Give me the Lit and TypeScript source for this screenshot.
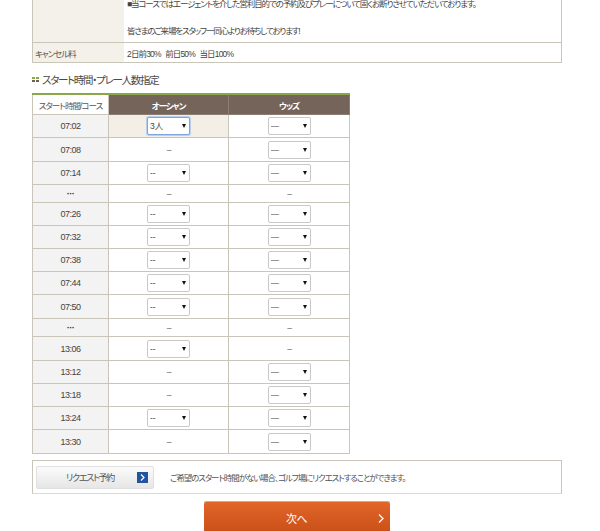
import { LitElement, html, css } from "lit";
import { customElement } from "lit/decorators.js";

type Row = { t: string; a: string | null; b: string | null; h: number; on?: boolean };
const rows: Row[] = [
  { t: "07:02", a: "3人", b: "—", h: 23, on: true },
  { t: "07:08", a: null, b: "—", h: 24 },
  { t: "07:14", a: "--", b: "—", h: 23 },
  { t: "···", a: null, b: null, h: 18 },
  { t: "07:26", a: "--", b: "—", h: 23 },
  { t: "07:32", a: "--", b: "—", h: 23 },
  { t: "07:38", a: "--", b: "—", h: 23 },
  { t: "07:44", a: "--", b: "—", h: 23 },
  { t: "07:50", a: "--", b: "—", h: 24 },
  { t: "···", a: null, b: null, h: 18 },
  { t: "13:06", a: "--", b: null, h: 24 },
  { t: "13:12", a: null, b: "—", h: 23 },
  { t: "13:18", a: null, b: "—", h: 23 },
  { t: "13:24", a: "--", b: "—", h: 23 },
  { t: "13:30", a: null, b: "—", h: 24 },
];

@customElement("app-root")
export class AppRoot extends LitElement {
  static styles = css`
    :host {
      display: block;
      width: 600px;
      height: 531px;
      overflow: hidden;
      background: #fff;
      color: #444;
      font-family: "Liberation Sans", "Noto Sans CJK JP", sans-serif;
      font-size: 8.5px;
      letter-spacing: -1.1px;
      font-feature-settings: "palt";
    }
    .wrap { padding: 0 38px 0 32px; }
    .info {
      border: 1px solid #c9c5b9;
      border-top: 0;
      display: grid;
      grid-template-columns: 91px 1fr;
    }
    .info .l { background: #f4f1ea; padding-left: 2px; display: flex; align-items: center; color: #555; }
    .info .r { padding-left: 3px; }
    .notice { height: 42px; overflow: hidden; border-bottom: 1px solid #c9c5b9; }
    .notice p { margin: 0; line-height: 13.5px; }
    .notice p:last-child { letter-spacing: -1.2px; }
    .notice .in { margin-top: -2px; }
    .lab1 { height: 42px; border-bottom: 1px solid #c9c5b9; }
    .fee { height: 19px; display: flex; align-items: center; }
    .r.fee { letter-spacing: -0.85px; }
    h2 {
      margin: 10px 0 7px;
      height: 13px;
      display: flex;
      align-items: center;
      gap: 3px;
      font-size: 10.5px;
      letter-spacing: -1.3px;
      font-weight: 400;
      color: #4a4a4a;
    }
    .dots { width: 7px; height: 6px; display: grid; grid-template-columns: 3px 3px; gap: 0 1px; grid-auto-rows: 3px; }
    .dots i { width: 3px; height: 2px; background: #6f5f55; }
    .dots i:nth-child(-n + 2) { background: #8aa84a; }
    table { border-collapse: collapse; table-layout: fixed; width: 317px; }
    th, td { border: 1px solid #c9c5b9; padding: 0; text-align: center; font-weight: 400; }
    thead th { height: 19px; background: #75645a; color: #fff; font-weight: 700; border-top: 2px solid #8aa84a; border-color: #8c7d72; border-top-color: #8aa84a; white-space: nowrap; }
    thead th.first { background: #fff; color: #555; font-weight: 400; border-color: #c9c5b9; border-top-color: #8aa84a; letter-spacing: -0.95px; }
    td.time { background: #f3f3f3; color: #444; font-size: 9px; letter-spacing: -0.5px; }
    td.dotrow { font-weight: 700; color: #333; }
    td.on { background: #f3efe6; }
    td { color: #666; }
    .sel { position: relative; display: inline-block; vertical-align: middle; width: 43px; height: 18px; }
    select {
      appearance: none;
      width: 43px;
      height: 18px;
      margin: 0;
      padding: 0 0 0 2px;
      border: 1px solid #c8c8c8;
      border-radius: 2px;
      background: #fff;
      color: #444;
      font: inherit;
      letter-spacing: 0;
      display: block;
    }
    .sel.focus select { border-color: #7da6e0; box-shadow: 0 0 0 1px #b8cff0; }
    .sel::after {
      content: "";
      position: absolute;
      right: 4px;
      top: 7px;
      border-style: solid;
      border-width: 4px 2.5px 0;
      border-color: #111 transparent transparent;
    }
    .req {
      margin-top: 6px;
      height: 32px;
      border: 1px solid #c9c5b9;
      border-bottom-color: #dedad0;
      display: flex;
      align-items: center;
      padding-left: 3px;
      gap: 16px;
      color: #555;
    }
    .rb {
      width: 118px;
      height: 23px;
      box-sizing: border-box;
      border: 1px solid #e0e0e0;
      border-radius: 2px;
      background: linear-gradient(#fbfbfb, #e6e6e6);
      display: flex;
      align-items: center;
      padding: 0 5px 0 29px;
      justify-content: space-between;
      color: #555;
      font-size: 9px;
      letter-spacing: -1.3px;
    }
    .sq { width: 11px; height: 11px; background: #2255a0; display: flex; align-items: center; justify-content: center; }
    .next {
      margin: 8px 0 0 172px;
      width: 186px;
      height: 40px;
      border-radius: 2px 2px 0 0;
      background: linear-gradient(#e2652a, #c24a12);
      box-shadow: 0 -1px 0 #e8a27e;
      color: #fff;
      font-size: 11px;
      letter-spacing: -0.5px;
      display: flex;
      align-items: flex-start;
      justify-content: center;
      position: relative;
    }
    .next span { margin-top: 8px; margin-right: 1px; }
    .next svg { position: absolute; right: 6px; top: 12px; }
  `;

  private cell(v: string | null, on?: boolean) {
    if (v === null) return html`<td>–</td>`;
    return html`<td class=${on ? "on" : ""}>
      <span class="sel ${on ? "focus" : ""}"><select><option>${v}</option></select></span>
    </td>`;
  }

  render() {
    return html`<div class="wrap">
      <div class="info">
        <div class="l lab1"></div>
        <div class="r notice"><div class="in">
          <p>■当コースではエージェントを介した営利目的での予約及びプレーについて固くお断りさせていただいております。</p>
          <p>&nbsp;</p>
          <p>皆さまのご来場をスタッフ一同心よりお待ちしております!</p>
        </div></div>
        <div class="l fee">キャンセル料</div>
        <div class="r fee">2日前30%&nbsp;&nbsp;&nbsp;前日50%&nbsp;&nbsp;&nbsp;当日100%</div>
      </div>
      <h2><span class="dots"><i></i><i></i><i></i><i></i></span>スタート時間・プレー人数指定</h2>
      <table>
        <colgroup><col style="width:76px" /><col style="width:120px" /><col style="width:121px" /></colgroup>
        <thead><tr>
          <th class="first">スタート時間/コース</th><th>オーシャン</th><th>ウッズ</th>
        </tr></thead>
        <tbody>
          ${rows.map(
            (r) => html`<tr style="height:${r.h}px">
              <td class="time ${r.t === "···" ? "dotrow" : ""}">${r.t}</td>
              ${this.cell(r.a, r.on)}${this.cell(r.b)}
            </tr>`
          )}
        </tbody>
      </table>
      <div class="req">
        <div class="rb">リクエスト予約<span class="sq"><svg width="5" height="7" viewBox="0 0 5 7"><path d="M1 .5 4 3.5 1 6.5" fill="none" stroke="#fff" stroke-width="1.2"/></svg></span></div>
        <span>ご希望のスタート時間がない場合、ゴルフ場にリクエストすることができます。</span>
      </div>
      <div class="next"><span>次へ</span><svg width="6" height="9" viewBox="0 0 6 9"><path d="M1 .5 5 4.5 1 8.5" fill="none" stroke="#fff" stroke-width="1.3"/></svg></div>
    </div>`;
  }
}
